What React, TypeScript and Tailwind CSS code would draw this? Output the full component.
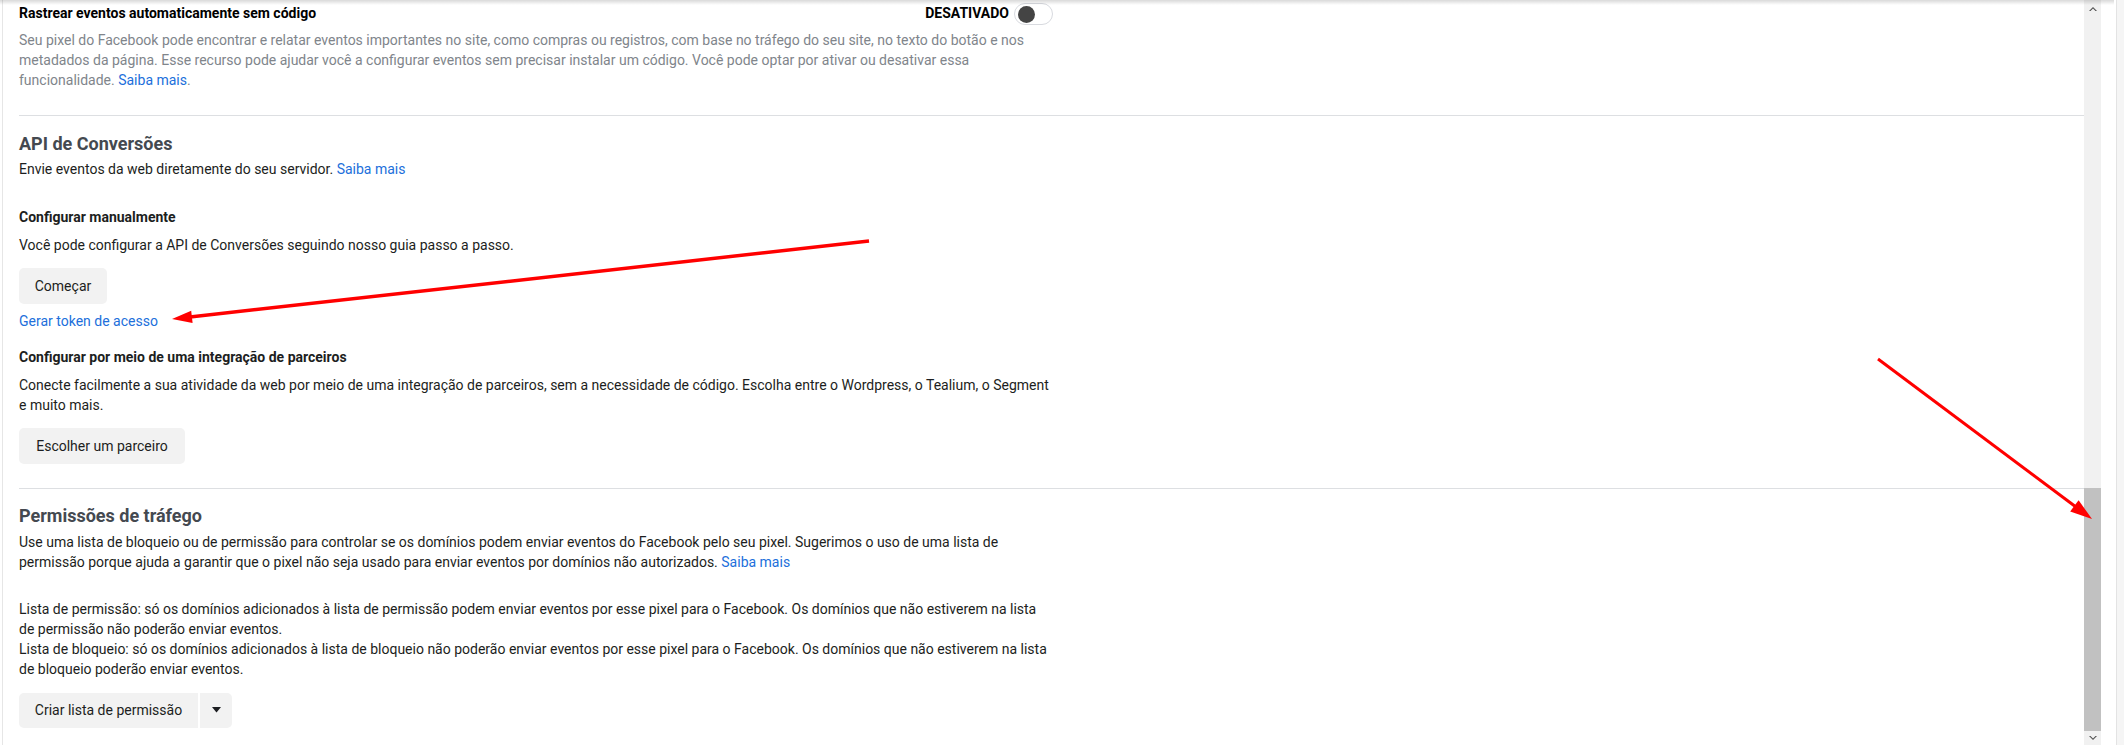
import React from 'react';

// Toggle switch shown in the off state
function Toggle() {
  return (
    <div className="w-[39px] h-[22px] rounded-full border border-[#d8dadf] bg-white flex items-center pl-[3px]">
      <div className="w-[17px] h-[17px] rounded-full bg-[#444444]" />
    </div>
  );
}

function GrayButton({ children, className }: { children: React.ReactNode; className: string }) {
  return (
    <button className={`h-[36px] rounded-[5px] bg-[#f2f2f2] text-[#1c1e21] flex items-center justify-center ${className}`}>
      {children}
    </button>
  );
}

function Link({ children }: { children: React.ReactNode }) {
  return <a className="text-[#216fdb] cursor-pointer">{children}</a>;
}

function Scrollbar() {
  return (
    <div className="w-[17px] h-full bg-[#f1f1f1] flex flex-col">
      <div className="h-[17px] flex items-center justify-center">
        <svg width="8" height="6" viewBox="0 0 8 6">
          <path d="M0 5 L4 1 L8 5 L6.5 5 L4 2.5 L1.5 5 Z" fill="#505050" />
        </svg>
      </div>
      <div className="h-[471px]" />
      <div className="h-[243px] bg-[#c1c1c1]" />
      <div className="flex-1 flex items-center justify-center">
        <svg width="8" height="6" viewBox="0 0 8 6">
          <path d="M0 1 L4 5 L8 1 L6.5 1 L4 3.5 L1.5 1 Z" fill="#505050" />
        </svg>
      </div>
    </div>
  );
}

export default function App() {
  return (
    <div className="relative w-[2124px] h-[745px] overflow-hidden bg-white flex font-[Roboto,sans-serif] text-[14px] leading-[20px] text-[#1c1e21]">
      <div className="w-[2px] shrink-0" />
      <main className="w-[2082px] shrink-0 border-l border-[#e6e6e6] pl-[16px] flex flex-col">
        {/* Rastrear eventos automaticamente */}
        <section className="border-b border-[#dddfe2] pb-[25px]">
          <div className="max-w-[1034px] pt-[3px]">
            <div className="flex items-start justify-between">
              <span className="font-bold text-black">Rastrear eventos automaticamente sem código</span>
              <div className="flex items-start gap-[5px]">
                <span className="font-bold text-black">DESATIVADO</span>
                <Toggle />
              </div>
            </div>
            <p className="mt-[5px] text-[#80858b]">
              Seu pixel do Facebook pode encontrar e relatar eventos importantes no site, como compras ou registros, com base no tráfego do seu site, no texto do botão e nos metadados da página. Esse recurso pode ajudar você a configurar eventos sem precisar instalar um código. Você pode optar por ativar ou desativar essa funcionalidade. <Link>Saiba mais</Link>.
            </p>
          </div>
        </section>

        {/* API de Conversões */}
        <section className="border-b border-[#dddfe2] pt-[18px] pb-[24px]">
          <div className="max-w-[1034px] flex flex-col">
            <h2 className="text-[18px] leading-[20px] font-bold text-[#444950]">API de Conversões</h2>
            <p className="mt-[5px]">
              Envie eventos da web diretamente do seu servidor. <Link>Saiba mais</Link>
            </p>
            <h3 className="mt-[28px] font-bold">Configurar manualmente</h3>
            <p className="mt-[8px]">Você pode configurar a API de Conversões seguindo nosso guia passo a passo.</p>
            <div className="mt-[12.5px] flex">
              <GrayButton className="w-[88px]">Começar</GrayButton>
            </div>
            <p className="mt-[7.5px]">
              <Link>Gerar token de acesso</Link>
            </p>
            <h3 className="mt-[16px] font-bold">Configurar por meio de uma integração de parceiros</h3>
            <p className="mt-[8px]">
              Conecte facilmente a sua atividade da web por meio de uma integração de parceiros, sem a necessidade de código. Escolha entre o Wordpress, o Tealium, o Segment e muito mais.
            </p>
            <div className="mt-[12.5px] flex">
              <GrayButton className="w-[166px]">Escolher um parceiro</GrayButton>
            </div>
          </div>
        </section>

        {/* Permissões de tráfego */}
        <section className="pt-[17.5px]">
          <div className="max-w-[1034px] flex flex-col">
            <h2 className="text-[18px] leading-[20px] font-bold text-[#444950]">Permissões de tráfego</h2>
            <p className="mt-[6px]">
              Use uma lista de bloqueio ou de permissão para controlar se os domínios podem enviar eventos do Facebook pelo seu pixel. Sugerimos o uso de uma lista de permissão porque ajuda a garantir que o pixel não seja usado para enviar eventos por domínios não autorizados. <Link>Saiba mais</Link>
            </p>
            <p className="mt-[27px]">
              Lista de permissão: só os domínios adicionados à lista de permissão podem enviar eventos por esse pixel para o Facebook. Os domínios que não estiverem na lista de permissão não poderão enviar eventos.
            </p>
            <p>
              Lista de bloqueio: só os domínios adicionados à lista de bloqueio não poderão enviar eventos por esse pixel para o Facebook. Os domínios que não estiverem na lista de bloqueio poderão enviar eventos.
            </p>
            <div className="mt-[13.5px] flex gap-[2px]">
              <button className="h-[35px] w-[179px] rounded-l-[5px] bg-[#f2f2f2] text-[#1c1e21]">Criar lista de permissão</button>
              <button className="h-[35px] w-[32px] rounded-r-[5px] bg-[#f2f2f2] flex items-center justify-center">
                <svg width="9" height="6" viewBox="0 0 9 6">
                  <path d="M0 0 H9 L4.5 5.5 Z" fill="#1c1e21" />
                </svg>
              </button>
            </div>
          </div>
        </section>
      </main>
      <Scrollbar />
      <div className="w-[15px] shrink-0 bg-white" />
      <div className="flex-1 border-l border-[#e3e3e3] bg-[#f5f5f5]" />

      {/* top shadow from the header above */}
      <div className="absolute left-0 top-0 w-[2114px] h-[5px] bg-gradient-to-b from-[#00000026] to-transparent" />

      {/* red annotation arrows */}
      <svg className="absolute left-0 top-0 pointer-events-none" width="2124" height="745">
        <line x1="869" y1="241" x2="190" y2="317" stroke="#ff0000" strokeWidth="3.5" />
        <polygon points="172,319 192.6,322.9 191.2,310.8" fill="#ff0000" />
        <line x1="1878" y1="359" x2="2076" y2="507" stroke="#ff0000" strokeWidth="3" />
        <polygon points="2092,519 2070.2,511.4 2078.6,500.2" fill="#ff0000" />
      </svg>
    </div>
  );
}
